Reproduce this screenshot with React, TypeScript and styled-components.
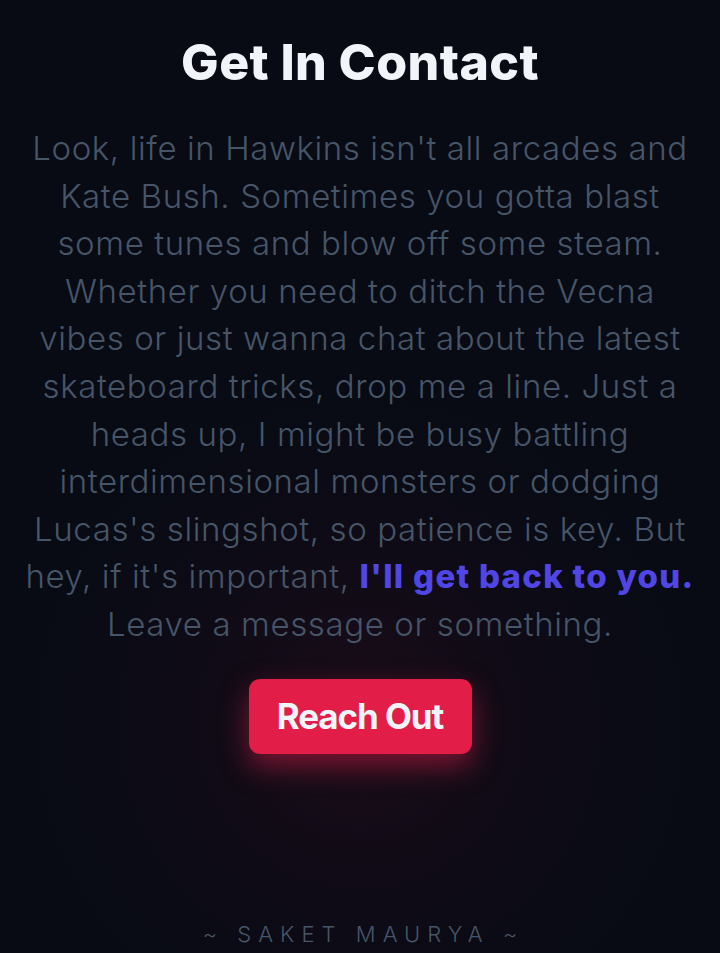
import React from 'react';
import styled, { createGlobalStyle } from 'styled-components';

const GlobalStyle = createGlobalStyle`
  html, body {
    margin: 0;
    padding: 0;
    background: #080b14;
  }
  * {
    box-sizing: border-box;
  }
`;

const Page = styled.main`
  position: relative;
  min-height: 953px;
  display: flex;
  flex-direction: column;
  align-items: center;
  padding: 28px 10px 0;
  font-family: Inter, 'Noto Sans', sans-serif;
  background:
    radial-gradient(circle at 50% 76%, rgba(120, 20, 50, 0.16) 0%, rgba(40, 10, 30, 0.12) 28%, rgba(8, 11, 20, 0) 42%),
    #080b14;
  overflow: hidden;
`;

const Title = styled.h1`
  margin: 0;
  color: #f1f5f9;
  font-size: 50px;
  font-weight: 800;
  letter-spacing: 0.4px;
  line-height: 68px;
  text-align: center;
`;

const Body = styled.p`
  margin: 29px 0 0;
  color: #475569;
  font-size: 33px;
  font-weight: 300;
  line-height: 47.6px;
  text-align: center;
  letter-spacing: 0.6px;
  white-space: nowrap;
`;

const Highlight = styled.span`
  color: #4f46e5;
  font-weight: 800;
  letter-spacing: 1.3px;
`;

const ReachButton = styled.button`
  margin-top: 30px;
  width: 223px;
  height: 75px;
  border: none;
  border-radius: 11px;
  background: #e11d48;
  color: #f1f5f9;
  font-family: Inter, 'Noto Sans', sans-serif;
  font-size: 35px;
  font-weight: 700;
  letter-spacing: -1.1px;
  box-shadow: 0 12px 28px rgba(225, 29, 72, 0.5);
  cursor: pointer;
`;

const Footer = styled.footer`
  padding-bottom: 4px;
  color: #475569;
  font-size: 22px;
  font-weight: 300;
  letter-spacing: 0.32em;
  line-height: 30px;
  margin-right: -0.32em;
`;

const Spacer = styled.div`
  flex: 1;
`;

const lines = [
  "Look, life in Hawkins isn't all arcades and",
  'Kate Bush. Sometimes you gotta blast',
  'some tunes and blow off some steam.',
  'Whether you need to ditch the Vecna',
  'vibes or just wanna chat about the latest',
  'skateboard tricks, drop me a line. Just a',
  'heads up, I might be busy battling',
  'interdimensional monsters or dodging',
  "Lucas's slingshot, so patience is key. But",
];

export default function App() {
  return (
    <>
      <GlobalStyle />
      <Page>
        <Title>Get In Contact</Title>
        <Body>
          {lines.map((l) => (
            <React.Fragment key={l}>
              {l}
              <br />
            </React.Fragment>
          ))}
          hey, if it's important, <Highlight>I'll get back to you.</Highlight>
          <br />
          Leave a message or something.
        </Body>
        <ReachButton>Reach Out</ReachButton>
        <Spacer />
        <Footer>~ SAKET MAURYA ~</Footer>
      </Page>
    </>
  );
}
